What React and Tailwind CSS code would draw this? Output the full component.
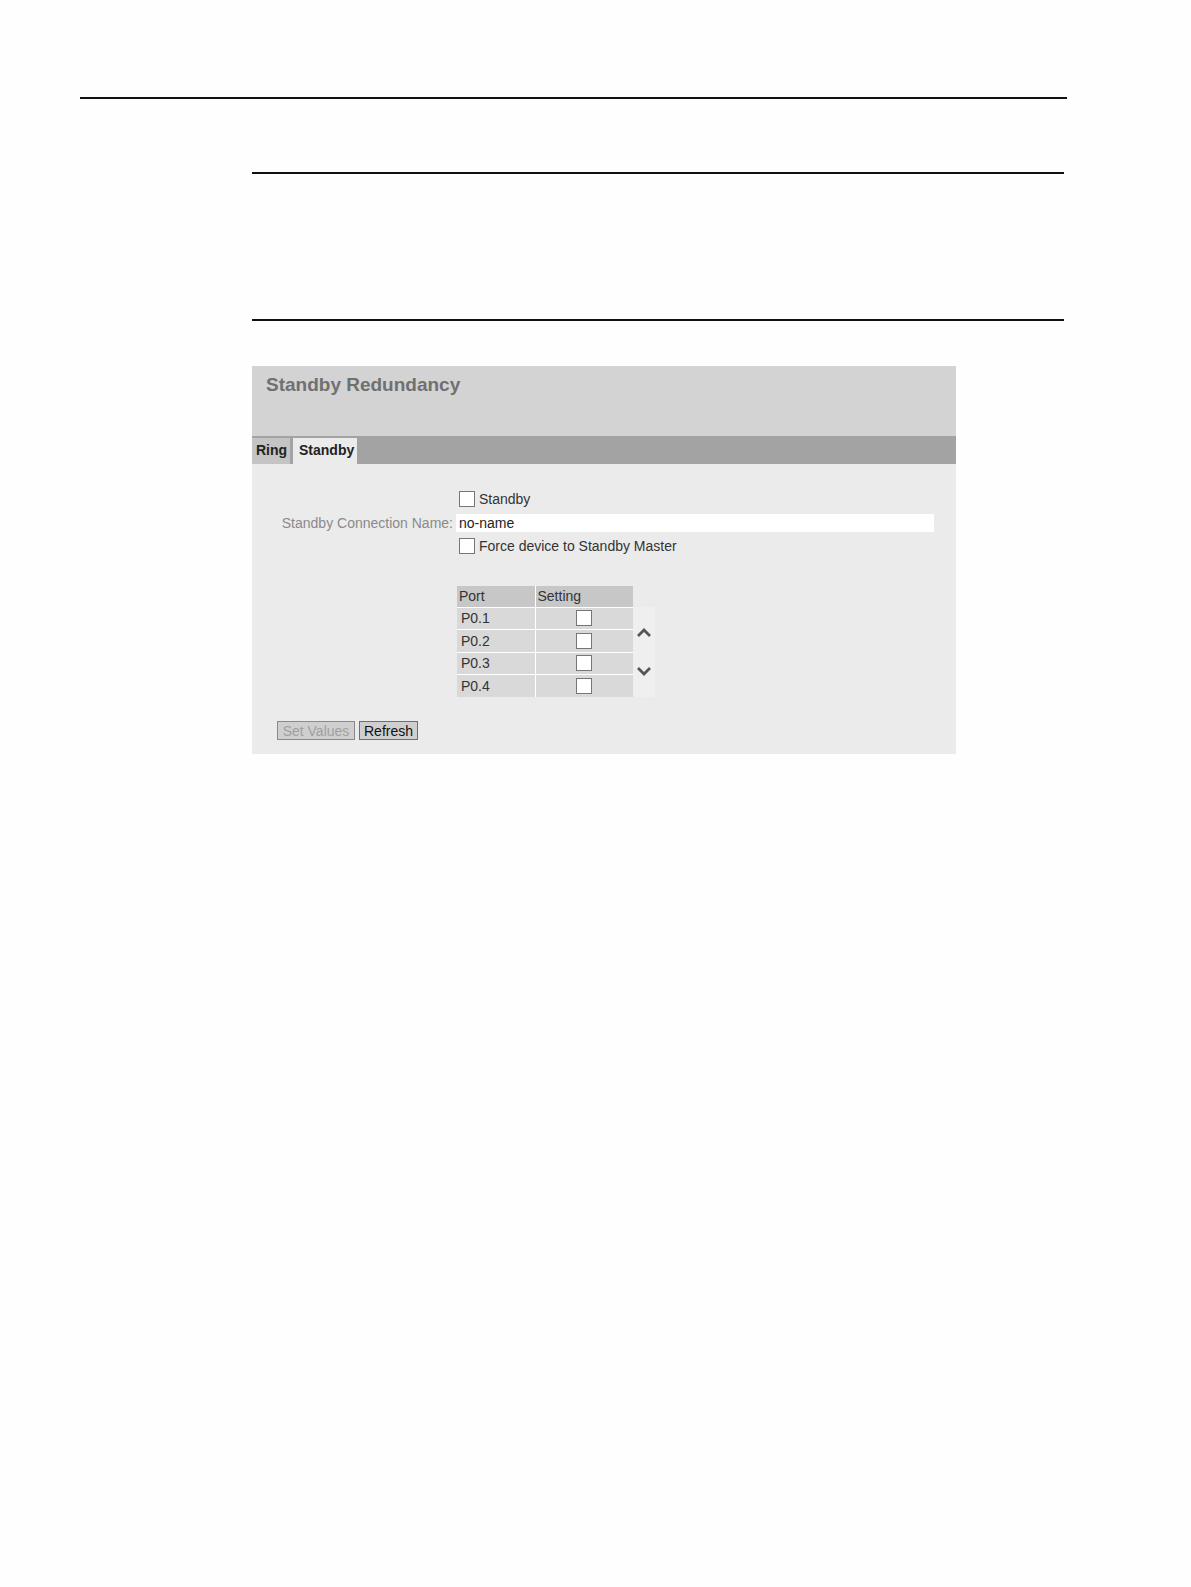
import React from "react";

const ports = ["P0.1", "P0.2", "P0.3", "P0.4"];

const Box = ({ className = "" }) => (
  <span
    className={`inline-block w-[16px] h-[16px] bg-white border border-[#767676] ${className}`}
  />
);

const StandbyPanel = () => {
  return (
    <div className="w-[704px] bg-[#ebebeb] text-[14px] leading-none">
      {/* title */}
      <div className="h-[70px] bg-[#d3d3d3] px-[14px] pt-[9px]">
        <h1 className="text-[19px] font-bold text-[#707070]">Standby Redundancy</h1>
      </div>

      {/* tabs */}
      <div className="h-[28px] bg-[#a3a3a3] flex items-end">
        <div className="h-[26px] w-[38px] bg-[#c4c4c4] flex items-start pt-[5px] pl-[4px] font-bold text-[#222] mr-[3px]">
          Ring
        </div>
        <div className="h-[26px] w-[64px] bg-[#ebebeb] flex items-start pt-[5px] pl-[6px] font-bold text-[#222]">
          Standby
        </div>
      </div>

      {/* form */}
      <div className="pt-[26px] pb-[14px]">
        <div className="flex">
          <div className="w-[204px]" />
          <label className="flex items-center gap-[4px] h-[18px] pl-[3px] text-[#333]">
            <Box />
            Standby
          </label>
        </div>
        <div className="flex items-center mt-[6px]">
          <span className="w-[204px] text-right pr-[3px] text-[#8a8a8a]">Standby Connection Name:</span>
          <div className="w-[478px] h-[18px] bg-white flex items-center pl-[3px] text-[#222]">no-name</div>
        </div>
        <div className="flex mt-[5px]">
          <div className="w-[204px]" />
          <label className="flex items-center gap-[4px] h-[18px] pl-[3px] text-[#333]">
            <Box />
            Force device to Standby Master
          </label>
        </div>

        {/* port table */}
        <div className="flex mt-[31px]">
          <div className="w-[205px]" />
          <table className="border-collapse text-[#333]">
            <thead>
              <tr className="h-[21px] bg-[#c7c7c7]">
                <th className="w-[78px] text-left font-normal pl-[2px] border-r border-white">Port</th>
                <th className="w-[98px] text-left font-normal pl-[2px]">Setting</th>
              </tr>
            </thead>
            <tbody>
              {ports.map((p) => (
                <tr key={p} className="h-[22px] bg-[#d9d9d9] border-t border-white">
                  <td className="pl-[4px] border-r border-white">{p}</td>
                  <td className="text-center align-middle">
                    <Box className="align-middle" />
                  </td>
                </tr>
              ))}
            </tbody>
          </table>
          <div className="w-[22px] mt-[21px] h-[90px] bg-[#efefef] flex flex-col items-center justify-center gap-[28px]">
            <svg width="16" height="11" viewBox="0 0 16 11">
              <path d="M2 9 L8 3 L14 9" fill="none" stroke="#555" strokeWidth="2.8" />
            </svg>
            <svg width="16" height="11" viewBox="0 0 16 11">
              <path d="M2 2 L8 8 L14 2" fill="none" stroke="#555" strokeWidth="2.8" />
            </svg>
          </div>
        </div>

        {/* buttons */}
        <div className="flex gap-[4px] mt-[24px] pl-[25px]">
          <button className="h-[19px] w-[78px] bg-[#cfcfcf] border border-[#8a8a8a] text-[#a0a0a0] leading-none">
            Set Values
          </button>
          <button className="h-[19px] w-[59px] bg-[#cfcfcf] border border-[#6f6f6f] text-[#111] leading-none">
            Refresh
          </button>
        </div>
      </div>
    </div>
  );
};

export default function App() {
  return (
    <div
      className="w-[1191px] h-[1587px] bg-[#fefefe] relative"
      style={{ fontFamily: '"Liberation Sans", Arial, sans-serif' }}
    >
      <div className="pt-[97px] pl-[80px]">
        <div className="w-[987px] h-[2px] bg-[#111]" />
      </div>
      <div className="pl-[252px]">
        <div className="mt-[73px] w-[812px] h-[2px] bg-[#111]" />
        <div className="mt-[145px] w-[812px] h-[2px] bg-[#111]" />
        <div className="mt-[45px]">
          <StandbyPanel />
        </div>
      </div>
    </div>
  );
}
